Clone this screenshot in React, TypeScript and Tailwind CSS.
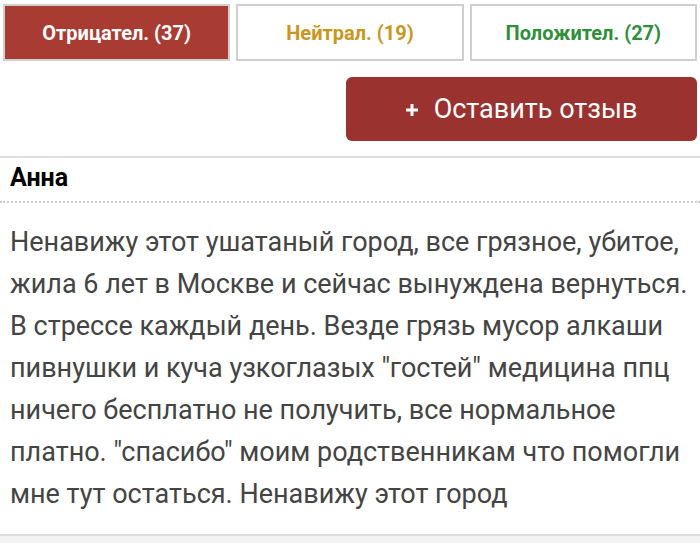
type Tab = {
  label: string;
  count: number;
  active?: boolean;
  color: string;
};

const tabs: Tab[] = [
  { label: "Отрицател.", count: 37, active: true, color: "text-white" },
  { label: "Нейтрал.", count: 19, color: "text-[#c9961f]" },
  { label: "Положител.", count: 27, color: "text-[#2f8f3b]" },
];

const review =
  'Ненавижу этот ушатаный город, все грязное, убитое, жила 6 лет в Москве и сейчас вынуждена вернуться. В стрессе каждый день. Везде грязь мусор алкаши пивнушки и куча узкоглазых "гостей" медицина ппц ничего бесплатно не получить, все нормальное платно. "спасибо" моим родственникам что помогли мне тут остаться. Ненавижу этот город';

export default function App() {
  return (
    <div className="w-[700px] h-[543px] bg-white overflow-hidden font-['Roboto',sans-serif]">
      <div className="flex gap-[6px] px-[3px] pt-[4px]">
        {tabs.map((tab) => (
          <div
            key={tab.label}
            className={
              "flex-1 h-[57px] flex items-center justify-center border-2 border-[#cfcfcf] text-[20px] font-bold " +
              tab.color +
              (tab.active ? " bg-[#a83c33]" : " bg-white")
            }
          >
            {tab.label + " (" + tab.count + ")"}
          </div>
        ))}
      </div>

      <div className="flex justify-end pr-[3px] pt-[16px]">
        <button className="w-[351px] h-[64px] rounded-[6px] bg-[#9a3330] text-white flex items-center justify-center gap-[16px] text-[27px]">
          <svg width="12" height="12" viewBox="0 0 12 12" className="mt-[1px]">
            <path d="M6 0v12M0 6h12" stroke="white" strokeWidth="3" />
          </svg>
          <span>Оставить отзыв</span>
        </button>
      </div>

      <div className="mt-[15px] border-t-2 border-[#dedede]">
        <div className="px-[10px] pt-[6px] pb-[9px] border-b-2 border-dotted border-[#cccccc] text-[25px] font-bold text-black leading-[28px]">
          Анна
        </div>
        <p className="pl-[10px] pr-[6px] pt-[18px] pb-[19px] text-[27px] leading-[42px] text-[#444444]">
          {review}
        </p>
      </div>

      <div className="border-t-2 border-[#dddddd] bg-[#f2f2f2] h-[20px]" />
    </div>
  );
}
